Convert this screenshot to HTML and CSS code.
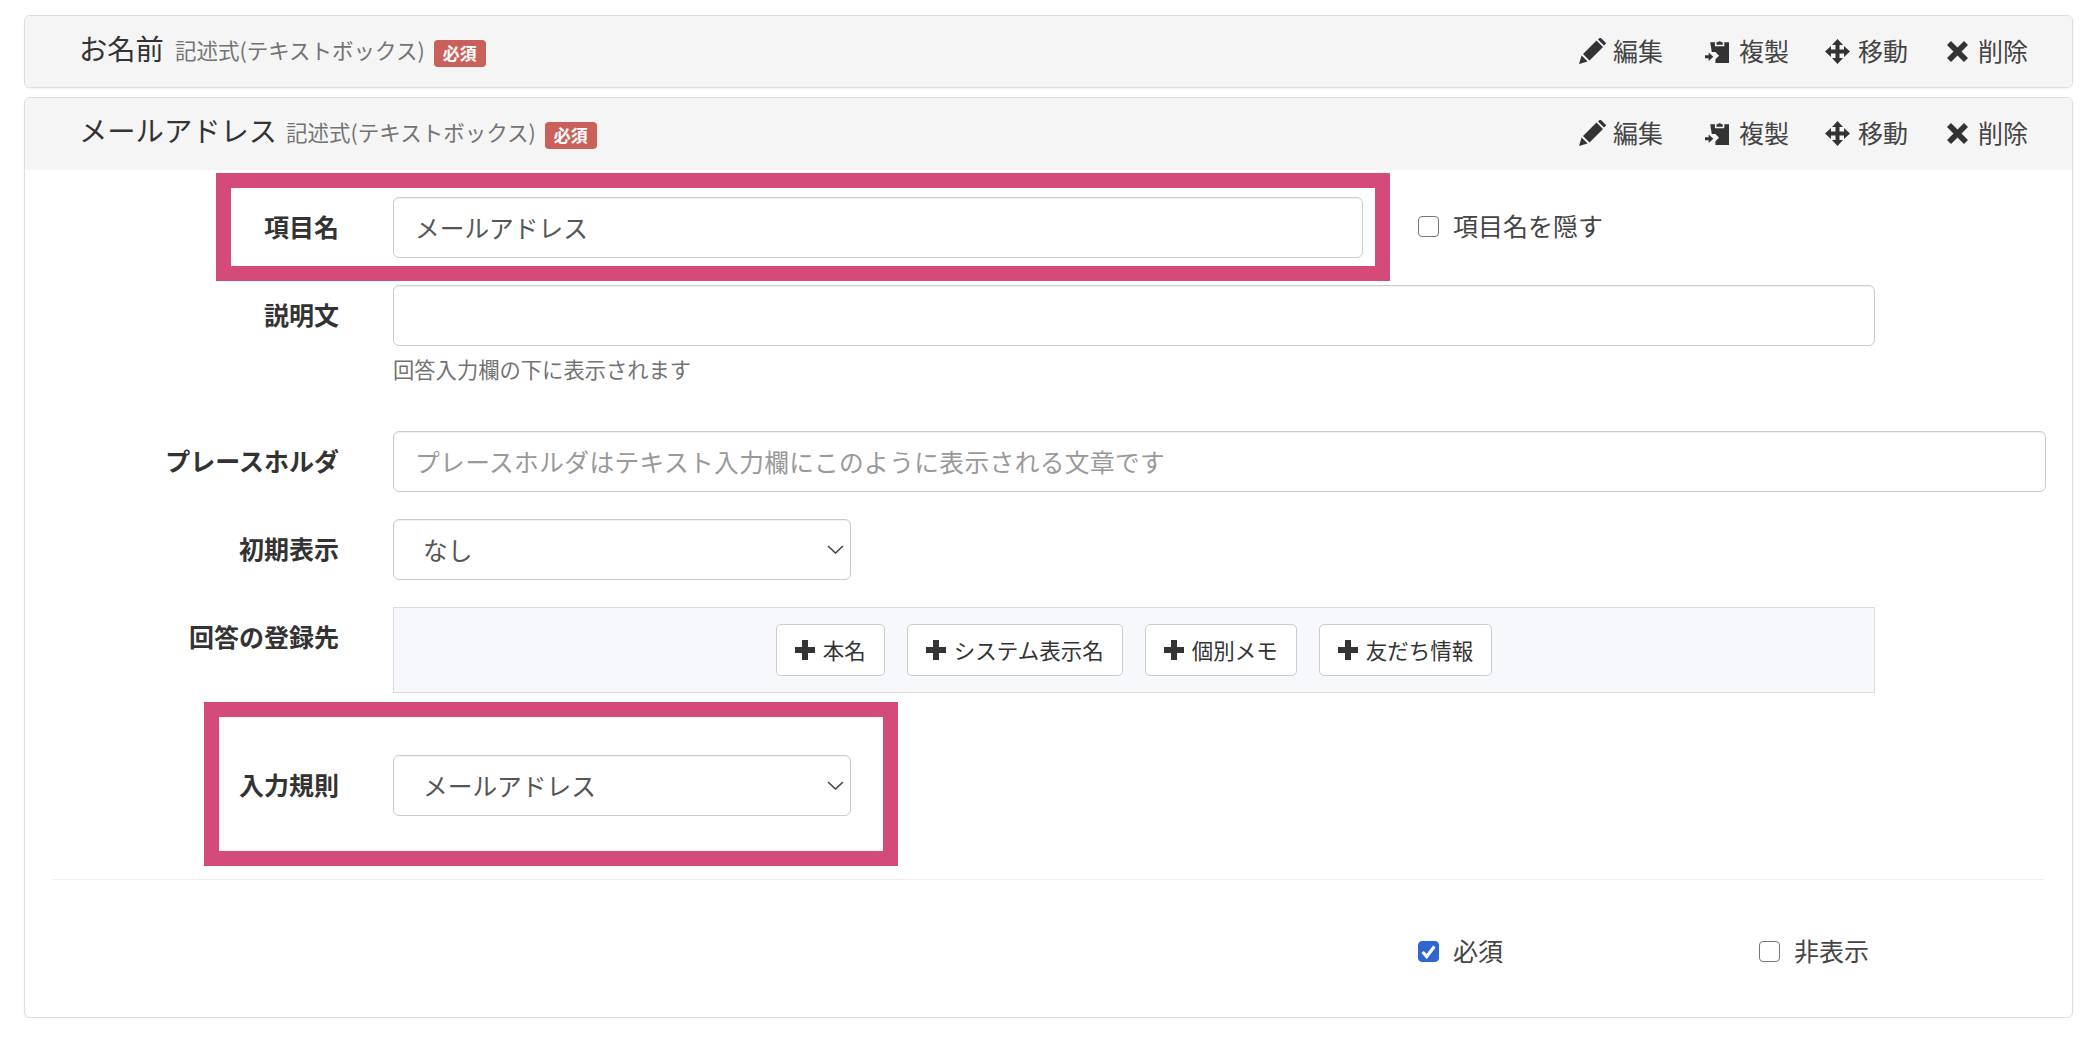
FILE: index.html
```html
<!DOCTYPE html>
<html lang="ja">
<head>
<meta charset="utf-8">
<title>フォーム項目</title>
<link rel="stylesheet" href="styles.css">
</head>
<body>
<section class="card card-closed">
  <header class="card-head">
    <div class="head-title"><span class="title">お名前</span><span class="sub">記述式(テキストボックス)</span><span class="badge">必須</span></div>
    <nav class="actions">
      <a class="act act-edit"><svg class="ico-pencil" viewBox="0 0 27 26"><path d="M0 26l2.6-8.6 6 6zM4 16L17.5 2.5l6.5 6.500L10.500 22.500zM19 1.500L20.500 0a1 1 0 0 1 1.500 0l4.500 4.500a1 1 0 0 1 0 1.500L25 7.500z"/></svg>編集</a>
      <a class="act act-copy"><svg class="ico-copy" viewBox="0 0 23 23"><path d="M5 3h4.500v4h9V3H23v20H10v-3.500l3.500-3.500L10 12.500H6.500zM11 5.500V3h1.200a2.300 2.300 0 0 1 3.600 0H17v2.500zM0 15.500h3.500V13L8 17l-4.500 4v-2.500H0z"/></svg>複製</a>
      <a class="act act-move"><svg class="ico-move" viewBox="0 0 25 25"><path d="M12.500 0L18 6h-3.500v4.500H19V7l6 5.500-6 5.500v-3.500h-4.500V19H18l-5.500 6L7 19h3.500v-4.500H6V18l-6-5.500L6 7v3.500h4.500V6H7z"/></svg>移動</a>
      <a class="act act-del"><svg class="ico-x" viewBox="0 0 21 21"><path d="M4 0l6.500 6.500L17 0l4 4-6.500 6.500L21 17l-4 4-6.500-6.500L4 21l-4-4 6.500-6.500L0 4z"/></svg>削除</a>
    </nav>
  </header>
</section>

<section class="card card-open">
  <header class="card-head">
    <div class="head-title"><span class="title">メールアドレス</span><span class="sub">記述式(テキストボックス)</span><span class="badge">必須</span></div>
    <nav class="actions">
      <a class="act act-edit"><svg class="ico-pencil" viewBox="0 0 27 26"><path d="M0 26l2.6-8.6 6 6zM4 16L17.5 2.5l6.5 6.500L10.500 22.500zM19 1.500L20.500 0a1 1 0 0 1 1.500 0l4.500 4.500a1 1 0 0 1 0 1.500L25 7.500z"/></svg>編集</a>
      <a class="act act-copy"><svg class="ico-copy" viewBox="0 0 23 23"><path d="M5 3h4.500v4h9V3H23v20H10v-3.500l3.500-3.500L10 12.500H6.500zM11 5.500V3h1.200a2.300 2.300 0 0 1 3.600 0H17v2.500zM0 15.500h3.500V13L8 17l-4.500 4v-2.500H0z"/></svg>複製</a>
      <a class="act act-move"><svg class="ico-move" viewBox="0 0 25 25"><path d="M12.500 0L18 6h-3.500v4.500H19V7l6 5.500-6 5.500v-3.500h-4.500V19H18l-5.500 6L7 19h3.500v-4.500H6V18l-6-5.500L6 7v3.500h4.500V6H7z"/></svg>移動</a>
      <a class="act act-del"><svg class="ico-x" viewBox="0 0 21 21"><path d="M4 0l6.500 6.500L17 0l4 4-6.500 6.500L21 17l-4 4-6.500-6.500L4 21l-4-4 6.500-6.500L0 4z"/></svg>削除</a>
    </nav>
  </header>

  <form class="card-body">
    <div class="mark mark-name"></div>
    <div class="mark mark-rule"></div>

    <div class="row row-name">
      <label class="lab">項目名</label>
      <input class="field w-name" type="text" value="メールアドレス">
      <label class="check check-hide"><input type="checkbox">項目名を隠す</label>
    </div>
    <div class="row row-desc">
      <label class="lab">説明文</label>
      <div class="stack">
        <input class="field w-wide" type="text">
        <p class="help">回答入力欄の下に表示されます</p>
      </div>
    </div>
    <div class="row row-ph">
      <label class="lab">プレースホルダ</label>
      <input class="field w-full" type="text" placeholder="プレースホルダはテキスト入力欄にこのように表示される文章です">
    </div>
    <div class="row row-init">
      <label class="lab">初期表示</label>
      <div class="sel-wrap">
        <select class="sel"><option>なし</option></select>
        <svg class="chev" viewBox="0 0 17 9"><path d="M1 1l7.500 7L16 1"/></svg>
      </div>
    </div>
    <div class="row row-dest">
      <label class="lab">回答の登録先</label>
      <div class="panel">
        <button class="btn" type="button"><svg class="ico-plus" viewBox="0 0 20 20"><path d="M7 0h6v7h7v6h-7v7H7v-7H0V7h7z"/></svg>本名</button>
        <button class="btn" type="button"><svg class="ico-plus" viewBox="0 0 20 20"><path d="M7 0h6v7h7v6h-7v7H7v-7H0V7h7z"/></svg>システム表示名</button>
        <button class="btn" type="button"><svg class="ico-plus" viewBox="0 0 20 20"><path d="M7 0h6v7h7v6h-7v7H7v-7H0V7h7z"/></svg>個別メモ</button>
        <button class="btn" type="button"><svg class="ico-plus" viewBox="0 0 20 20"><path d="M7 0h6v7h7v6h-7v7H7v-7H0V7h7z"/></svg>友だち情報</button>
      </div>
    </div>
    <div class="row row-rule">
      <label class="lab">入力規則</label>
      <div class="sel-wrap">
        <select class="sel"><option>メールアドレス</option></select>
        <svg class="chev" viewBox="0 0 17 9"><path d="M1 1l7.500 7L16 1"/></svg>
      </div>
    </div>
    <hr class="rule">
    <div class="foot">
      <label class="check check-req"><input type="checkbox" checked>必須</label>
      <label class="check check-off"><input type="checkbox">非表示</label>
    </div>
  </form>
</section>
</body>
</html>
```
FILE: styles.css
```css
* { box-sizing: border-box; }
html, body { margin: 0; padding: 0; background: #fff; }
body {
  padding: 15px 21px 0 24px;
  font-family: "Noto Sans CJK JP", "Liberation Sans", sans-serif;
  color: #333;
  font-size: 24px;
}
.card {
  border: 1px solid #ddd;
  border-radius: 6px;
  box-shadow: 0 1px 2px rgba(0,0,0,.05);
  background: #fff;
  overflow: hidden;
}
.card-closed { height: 73px; margin-bottom: 9px; }
.card-open { height: 921px; }
.card-head {
  display: flex;
  justify-content: space-between;
  align-items: center;
  height: 72px;
  background: #f5f5f5;
  padding: 0 44px 0 54px;
}
.head-title { display: flex; align-items: center; margin-top: -3px; }
.title { font-size: 28.300px; color: #333; line-height: 40px; margin-top: -5px; }
.sub { font-size: 21.500px; color: #737373; margin-left: 11px; line-height: 40px; margin-top: -1px; }
.card-open .sub { margin-left: 9px; }
.badge {
  display: inline-flex;
  align-items: center;
  justify-content: center;
  width: 52px;
  height: 27px;
  margin-left: 9px;
  margin-top: 5px;
  background: #c9605a;
  border-radius: 4px;
  color: #fff;
  font-size: 17px;
  font-weight: 700;
  line-height: 25px;
  padding-bottom: 2px;
}
.actions { display: flex; align-items: center; height: 40px; margin-top: -4px; }
.act { display: flex; align-items: center; font-size: 25px; color: #444; line-height: 36px; }
.act svg { fill: #333; flex: none; margin-top: 2px; }
.act-copy { margin-left: 42px; }
.act-move { margin-left: 36px; }
.act-del { margin-left: 39px; }
.ico-pencil { width: 27px; height: 26px; margin-right: 7px; }
.ico-copy { width: 24px; height: 24px; margin-right: 10px; }
.ico-move { width: 25px; height: 25px; margin-right: 8px; }
.ico-x { width: 21px; height: 21px; margin-right: 10px; }

.card-body { position: relative; padding: 27px 0 0 0; height: 848px; }
.row { display: flex; align-items: flex-start; }
.lab {
  flex: none;
  width: 314px;
  margin-right: 54px;
  text-align: right;
  font-weight: 700;
  line-height: 58px;
  color: #333;
  font-size: 25px;
}
.field, .sel {
  height: 61px;
  border: 1px solid #ccc;
  border-radius: 6px;
  background: #fff;
  font: inherit;
  font-size: 24.700px;
  color: #555;
  box-shadow: inset 0 1px 1px rgba(0,0,0,.06);
  outline: none;
}
.field { padding: 0 21px 2px; }
.field::placeholder { color: #999; opacity: 1; letter-spacing: .4px; }
.w-name { width: 970px; }
.w-wide { width: 1482px; }
.w-full { width: 1653px; }
.row-name { margin-bottom: 27px; }
.row-desc { margin-bottom: 47px; }
.row-ph { margin-bottom: 27px; }
.row-init { margin-bottom: 27px; }
.row-dest { margin-bottom: 62px; }
.stack { display: flex; flex-direction: column; }
.help { margin: 8px 0 0; font-size: 21.300px; line-height: 30px; color: #737373; }
.check { display: flex; align-items: center; font-size: 25px; color: #444; line-height: 56px; }
.check input {
  appearance: none;
  -webkit-appearance: none;
  width: 21px;
  height: 21px;
  margin: 3px 14px 0 0;
  border: 1.500px solid #777;
  border-radius: 4px;
  background: #fff;
}
.check input:checked {
  border-color: #2f66d0;
  background: #2f66d0 url("data:image/svg+xml;utf8,<svg xmlns='http://www.w3.org/2000/svg' viewBox='0 0 21 21'><path d='M4 11l4.500 5L17 5' fill='none' stroke='white' stroke-width='3.500'/></svg>") center / 100% no-repeat;
}
.check-hide { margin-left: 55px; }
.sel-wrap { position: relative; width: 458px; height: 61px; }
.sel {
  width: 100%;
  padding: 0 29px 2px;
  appearance: none;
  -webkit-appearance: none;
}
.chev {
  position: absolute;
  right: 7px;
  top: 26px;
  width: 17px;
  height: 9px;
  fill: none;
  stroke: #444;
  stroke-width: 1.600;
  pointer-events: none;
}
.panel {
  width: 1482px;
  height: 86px;
  display: flex;
  justify-content: center;
  align-items: center;
  gap: 22px;
  background: #f7f8fc;
  border: 1px solid #ddd;
}
.btn {
  display: inline-flex;
  align-items: center;
  height: 52px;
  padding: 0 18px 2px;
  background: #fff;
  border: 1px solid #ccc;
  border-radius: 5px;
  font: inherit;
  font-size: 21.500px;
  color: #333;
}
.ico-plus { width: 20px; height: 20px; margin-right: 8px; margin-top: 2px; fill: #333; flex: none; }
.rule {
  margin: 63px 28px 0 28px;
  border: 0;
  border-top: 1px solid #eee;
}
.foot { display: flex; margin-top: 42px; padding-left: 1393px; }
.check-off { margin-left: 256px; }
.mark {
  position: absolute;
  border-style: solid;
  border-color: #d34a7b;
  border-width: 15px;
  pointer-events: none;
}
.mark-name { left: 191px; top: 3px; width: 1174px; height: 108px; }
.mark-rule { left: 179px; top: 532px; width: 694px; height: 164px; }
```
